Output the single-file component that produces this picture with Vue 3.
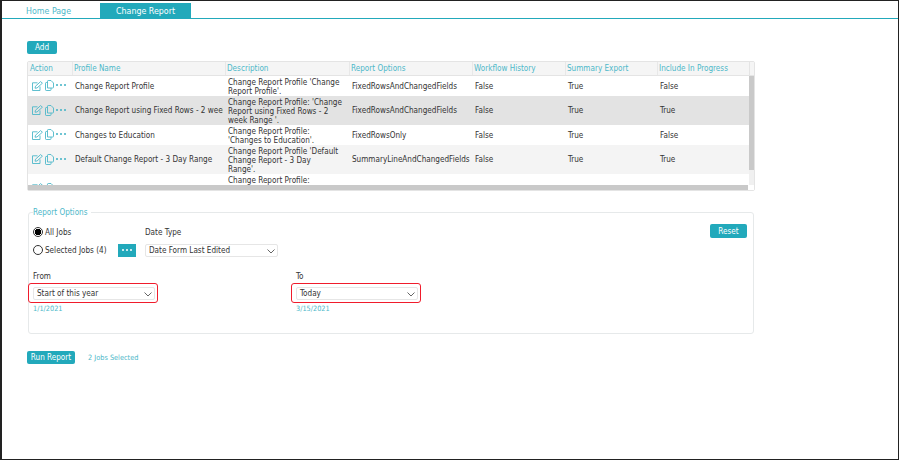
<template>
  <div class="frame">
    <div class="tabs">
      <div class="tab">Home Page</div>
      <div class="tab active">Change Report</div>
    </div>

    <div class="page">
      <button class="btn add">Add</button>

      <div class="grid">
        <div class="head-row">
          <div class="head-cols">
            <div v-for="col in columns" :key="col.label" class="head-cell" :style="{ width: col.width + 'px' }">
              {{ col.label }}
            </div>
          </div>
          <div class="head-corner"></div>
        </div>
        <div class="body-wrap">
          <div class="rows">
            <div
              v-for="(row, index) in rows"
              :key="index"
              class="row"
              :class="row.cls"
            >
              <div class="cell action" :style="{ width: columns[0].width + 'px' }">
                <svg class="ic edit" width="11" height="10" viewBox="0 0 11 10" fill="none" stroke="#4db8c9" stroke-width="0.9">
                  <path d="M8 5.5V9.5H.5V1.8H5.5" />
                  <path d="M3 7.2L3.5 5.2L8.6 .6L10.4 2.2L5 7Z" />
                </svg>
                <svg class="ic copy" width="9" height="11" viewBox="0 0 9 11" fill="none" stroke="#4db8c9" stroke-width="0.9">
                  <path d="M2.5 8V1.2C2.5 .8 2.8 .5 3.2 .5H6L8.5 3V7.3C8.5 7.7 8.2 8 7.8 8Z" />
                  <path d="M2.5 2.5H1.2C.8 2.5 .5 2.8 .5 3.2V9.8C.5 10.2 .8 10.5 1.2 10.5H5.3C5.7 10.5 6 10.2 6 9.8V8" />
                </svg>
                <span class="dots"><i></i><i></i><i></i></span>
              </div>
              <div class="cell name" :style="{ width: columns[1].width + 'px' }">{{ row.name }}</div>
              <div class="cell desc" :style="{ width: columns[2].width + 'px' }">
                <div v-for="line in row.desc" :key="line">{{ line }}</div>
              </div>
              <div class="cell" :style="{ width: columns[3].width + 'px' }">{{ row.options }}</div>
              <div class="cell" :style="{ width: columns[4].width + 'px' }">{{ row.history }}</div>
              <div class="cell" :style="{ width: columns[5].width + 'px' }">{{ row.summary }}</div>
              <div class="cell" :style="{ width: columns[6].width + 'px' }">{{ row.progress }}</div>
            </div>
          </div>
          <div class="v-track"><div class="v-thumb"></div></div>
        </div>
        <div class="h-track"><div class="h-thumb"></div></div>
      </div>

      <fieldset class="options">
        <legend>Report Options</legend>
        <button class="btn reset">Reset</button>

        <div class="jobs-line">
          <div class="jobs">
            <label class="radio-line"><span class="radio on"></span>All Jobs</label>
            <label class="radio-line second">
              <span class="radio"></span>Selected Jobs (4)
              <span class="more"><i></i><i></i><i></i></span>
            </label>
          </div>
          <div class="date-type">
            <div class="lbl">Date Type</div>
            <div class="select wide">
              Date Form Last Edited
              <svg class="chev" width="8" height="5" viewBox="0 0 8 5" fill="none" stroke="#666" stroke-width="1"><path d="M.5 .5L4 4L7.5 .5" /></svg>
            </div>
          </div>
        </div>

        <div class="range-line">
          <div v-for="item in ranges" :key="item.label" class="range" :class="item.cls">
            <div class="lbl">{{ item.label }}</div>
            <div class="hilite">
              <div class="select">
                {{ item.value }}
                <svg class="chev" width="8" height="5" viewBox="0 0 8 5" fill="none" stroke="#666" stroke-width="1"><path d="M.5 .5L4 4L7.5 .5" /></svg>
              </div>
            </div>
            <div class="date">{{ item.date }}</div>
          </div>
        </div>
      </fieldset>

      <div class="run-line">
        <button class="btn run">Run Report</button>
        <span class="selected">2 Jobs Selected</span>
      </div>
    </div>
  </div>
</template>

<script setup>
const columns = [
  { label: 'Action', width: 44 },
  { label: 'Profile Name', width: 153 },
  { label: 'Description', width: 124 },
  { label: 'Report Options', width: 123 },
  { label: 'Workflow History', width: 93 },
  { label: 'Summary Export', width: 92 },
  { label: 'Include In Progress', width: 92 }
]

const rows = [
  {
    cls: 'h20',
    name: 'Change Report Profile',
    desc: ["Change Report Profile 'Change", "Report Profile'."],
    options: 'FixedRowsAndChangedFields',
    history: 'False',
    summary: 'True',
    progress: 'False'
  },
  {
    cls: 'h29 selected-row',
    name: 'Change Report using Fixed Rows - 2 week Range',
    desc: ["Change Report Profile: 'Change", 'Report using Fixed Rows - 2', "week Range '."],
    options: 'FixedRowsAndChangedFields',
    history: 'False',
    summary: 'True',
    progress: 'True'
  },
  {
    cls: 'h20',
    name: 'Changes to Education',
    desc: ['Change Report Profile:', "'Changes to Education'."],
    options: 'FixedRowsOnly',
    history: 'False',
    summary: 'True',
    progress: 'False'
  },
  {
    cls: 'h29 alt',
    name: 'Default Change Report - 3 Day Range',
    desc: ["Change Report Profile 'Default", 'Change Report - 3 Day', "Range'."],
    options: 'SummaryLineAndChangedFields',
    history: 'False',
    summary: 'True',
    progress: 'True'
  },
  {
    cls: 'h29',
    name: '',
    desc: ['Change Report Profile:'],
    options: '',
    history: '',
    summary: '',
    progress: ''
  }
]

const ranges = [
  { label: 'From', value: 'Start of this year', date: '1/1/2021', cls: 'from' },
  { label: 'To', value: 'Today', date: '3/15/2021', cls: 'to' }
]
</script>

<style>
html, body {
  margin: 0;
  background: #fff;
}
</style>

<style scoped>
.frame {
  box-sizing: border-box;
  width: 899px;
  height: 460px;
  border: 1px solid #222;
  border-left-width: 2px;
  background: #fff;
  font-family: "DejaVu Sans", sans-serif;
  font-stretch: condensed;
  font-size: 8.1px;
  color: #333;
  overflow: hidden;
}

.tabs {
  display: flex;
  height: 15px;
  margin-top: 2px;
  border-bottom: 1px solid #22a9bb;
}

.tab {
  width: 98px;
  padding-left: 24px;
  box-sizing: border-box;
  font-size: 8.8px;
  line-height: 17px;
  color: #4db8c9;
}

.tab.active {
  width: 91px;
  padding-left: 0;
  text-align: center;
  background: #22a9bb;
  color: #fff;
  line-height: 16px;
}

.page {
  padding: 22px 0 0 25px;
}

.btn {
  display: block;
  border: 0;
  padding: 0;
  border-radius: 2px;
  background: #22a9bb;
  color: #fff;
  font-family: inherit;
  font-stretch: inherit;
  font-size: 8.1px;
  height: 13px;
  line-height: 13px;
  text-align: center;
}

.add {
  width: 30px;
}

.grid {
  box-sizing: border-box;
  width: 728px;
  margin-top: 7px;
  border: 1px solid #e4e4e4;
  border-radius: 2px;
}

.head-row {
  display: flex;
  height: 14px;
  background: #f5f5f5;
  border-bottom: 1px solid #e4e4e4;
  box-sizing: border-box;
}

.head-cols {
  display: flex;
  width: 721px;
}

.head-cell {
  box-sizing: border-box;
  padding-left: 1px;
  line-height: 13px;
  color: #4db8c9;
  border-left: 1px solid #e8e8e8;
  white-space: nowrap;
}

.head-cell:first-child {
  border-left: 0;
  padding-left: 2px;
}

.head-corner {
  flex: 1;
  border-left: 1px solid #e4e4e4;
}

.body-wrap {
  display: flex;
  height: 109px;
  overflow: hidden;
}

.rows {
  width: 721px;
  overflow: hidden;
}

.row {
  display: flex;
  align-items: center;
  background: #fff;
}

.row.h20 {
  height: 20px;
}

.row.h29 {
  height: 29px;
}

.row.selected-row {
  background: #e3e3e3;
}

.row.alt {
  background: #f4f4f4;
}

.cell {
  box-sizing: border-box;
  padding-left: 3px;
  flex: none;
  line-height: 9px;
  color: #333;
}

.cell.action {
  display: flex;
  align-items: center;
  padding: 0 0 1px 4px;
  height: 100%;
}

.cell.name {
  white-space: nowrap;
  overflow: hidden;
  border-right: 2px solid transparent;
}

.cell.desc {
  white-space: nowrap;
  overflow: hidden;
  align-self: flex-start;
  padding-top: 2px;
}

.ic {
  flex: none;
  display: block;
}

.copy {
  margin-left: 1.5px;
}

.dots {
  display: flex;
  gap: 2px;
  margin: 0 0 1px 2.5px;
}

.dots i {
  width: 2px;
  height: 2px;
  border-radius: 50%;
  background: #3fb2c4;
}

.v-track {
  flex: 1;
  background: #f0f0f0;
}

.v-thumb {
  height: 94px;
  background: #c9c9c9;
}

.h-track {
  display: flex;
  height: 5px;
  background: #fff;
}

.h-thumb {
  width: 720px;
  background: #c9c9c9;
}

.options {
  position: relative;
  box-sizing: border-box;
  width: 726px;
  height: 127px;
  margin: 16px 0 0 1px;
  padding: 10px 0 0 4px;
  border: 1px solid #e6e9ea;
  border-radius: 3px;
}

legend {
  padding: 0 3px 0 0;
  line-height: 10px;
  color: #4db8c9;
}

.reset {
  position: absolute;
  top: 7px;
  right: 6px;
  width: 37px;
  height: 14px;
}

.jobs-line {
  display: flex;
}

.jobs {
  width: 112px;
}

.radio-line {
  display: flex;
  align-items: center;
  height: 10px;
  white-space: nowrap;
}

.radio-line.second {
  margin-top: 8px;
}

.radio {
  box-sizing: border-box;
  width: 10px;
  height: 10px;
  margin-right: 2px;
  border: 1px solid #333;
  border-radius: 50%;
  background: #fff;
}

.radio.on {
  background: radial-gradient(circle, #000 0 3px, #fff 3.5px);
}

.more {
  display: flex;
  align-items: center;
  justify-content: center;
  gap: 2px;
  flex: none;
  width: 18px;
  height: 13px;
  margin: 0 9px 0 auto;
  background: #22a9bb;
}

.more i {
  width: 2px;
  height: 2px;
  border-radius: 50%;
  background: #fff;
}

.date-type .lbl {
  line-height: 10px;
}

.select {
  position: relative;
  box-sizing: border-box;
  width: 122px;
  height: 13px;
  padding-left: 3px;
  line-height: 11px;
  border: 1px solid #e6e6e6;
  border-radius: 2px;
  background: #fff;
  color: #333;
}

.select.wide {
  width: 133px;
  margin-top: 7px;
}

.chev {
  position: absolute;
  top: 4px;
  right: 2px;
}

.range-line {
  display: flex;
  margin-top: 14px;
}

.range.from {
  width: 263px;
  margin-left: -5px;
}

.range .lbl {
  margin-left: 5px;
  line-height: 10px;
}

.hilite {
  box-sizing: border-box;
  width: 130px;
  height: 20px;
  margin-top: 2px;
  padding: 3px 0 0 4px;
  border: 1.5px solid #f01c2c;
  border-radius: 3px;
}

.date {
  margin: 1px 0 0 5px;
  font-size: 7.3px;
  line-height: 9px;
  color: #4db8c9;
}

.run-line {
  display: flex;
  align-items: center;
  margin-top: 17px;
}

.run {
  width: 48px;
}

.selected {
  margin-left: 13px;
  font-size: 7.3px;
  color: #4db8c9;
}
</style>
